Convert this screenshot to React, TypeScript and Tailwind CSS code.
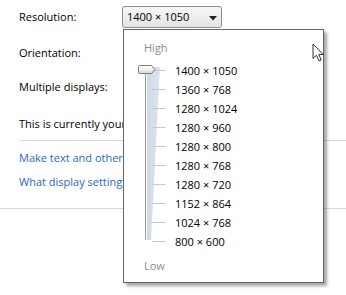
import React from "react";

const items = [
  "1400 × 1050",
  "1360 × 768",
  "1280 × 1024",
  "1280 × 960",
  "1280 × 800",
  "1280 × 768",
  "1280 × 720",
  "1152 × 864",
  "1024 × 768",
  "800 × 600",
];

function Slider() {
  return (
    <svg width="33" height="190" viewBox="0 0 33 190" className="shrink-0">
      <defs>
        <linearGradient id="thumb" x1="0" y1="0" x2="0" y2="1">
          <stop offset="0" stopColor="#ffffff" />
          <stop offset="0.5" stopColor="#f1f1f1" />
          <stop offset="1" stopColor="#d4d4d4" />
        </linearGradient>
        <linearGradient id="wedge" x1="0" y1="0" x2="1" y2="0">
          <stop offset="0" stopColor="#cfd9e5" />
          <stop offset="1" stopColor="#dde4ed" />
        </linearGradient>
      </defs>
      <polygon points="10,6 23,6 14,179 10,179" fill="url(#wedge)" />
      {items.map((_, i) => (
        <line key={i} x1="15" x2="29" y1={9.5 + i * 19} y2={9.5 + i * 19} stroke="#c9c9c9" strokeWidth="1" />
      ))}
      <line x1="8.5" x2="8.5" y1="8" y2="179" stroke="#9a9a9a" strokeWidth="1" />
      <path
        d="M2.5,4.5 Q1.5,4.5 1.5,5.5 L1.5,11.5 Q1.5,12.5 2.5,12.5 L14.5,12.5 L18,8.5 L14.5,4.5 Z"
        fill="url(#thumb)"
        stroke="#7d7d7d"
        strokeWidth="1"
      />
    </svg>
  );
}

export default function App() {
  return (
    <div
      className="relative w-[346px] h-[295px] overflow-hidden bg-white text-[11px] leading-[16px] text-black"
      style={{ fontFamily: "'Open Sans', 'Noto Sans', sans-serif" }}
    >
      <div className="flex flex-col">
        <div className="flex items-center h-[22px] mt-[6px] pl-[19px]">
          <span className="w-[103px]">Resolution:</span>
          <div className="flex items-center w-[100px] h-[22px] rounded-[3px] border border-[#8e8f8f] bg-gradient-to-b from-[#f7f7f7] to-[#e4e4e4] pl-[4px]">
            <span className="flex-1">1400 × 1050</span>
            <svg width="8" height="5" viewBox="0 0 8 5" className="mr-[4px] mt-[2px]">
              <polygon points="0,0 8,0 4,4.5" fill="#222" />
            </svg>
          </div>
        </div>
        <div className="mt-[17px] pl-[19px]">Orientation:</div>
        <div className="mt-[18px] pl-[19px]">Multiple displays:</div>
        <div className="mt-[21px] ml-[19px] w-[104px] overflow-hidden whitespace-nowrap">This is currently your recommended resolution</div>
        <div className="mt-[8px] ml-[19px] h-px bg-[#d6d6d6]" />
        <div className="mt-[9px] ml-[19px] w-[104px] overflow-hidden text-[#2a68c0] whitespace-nowrap">Make text and other items larger or smaller</div>
        <div className="mt-[8px] ml-[19px] w-[104px] overflow-hidden text-[#2a68c0] whitespace-nowrap">What display settings should I choose?</div>
        <div className="mt-[18px] h-px bg-[#d6d6d6]" />
      </div>

      <div className="absolute left-[123px] top-[29px] w-[201px] h-[254px] border border-[#666] bg-white shadow-[3px_3px_3px_rgba(0,0,0,0.35)] flex flex-col">
        <div className="pl-[20px] mt-[8px] leading-[19px] text-[#8c8c8c]">High</div>
        <div className="flex mt-[4px] pl-[13px]">
          <Slider />
          <div className="flex flex-col pl-[5px]">
            {items.map((t) => (
              <div key={t} className="h-[19px] leading-[19px] whitespace-nowrap">
                {t}
              </div>
            ))}
          </div>
        </div>
        <div className="pl-[20px] mt-[5px] leading-[19px] text-[#8c8c8c]">Low</div>
      </div>

      <svg width="13" height="20" viewBox="0 0 13 20" className="absolute left-[312px] top-[43px]">
        <path d="M1,1 L1,15.5 L4.5,12.2 L7,18 L9.2,17 L6.8,11.5 L11.2,11.5 Z" fill="#fff" stroke="#333" strokeWidth="1" strokeLinejoin="round" />
      </svg>
    </div>
  );
}
